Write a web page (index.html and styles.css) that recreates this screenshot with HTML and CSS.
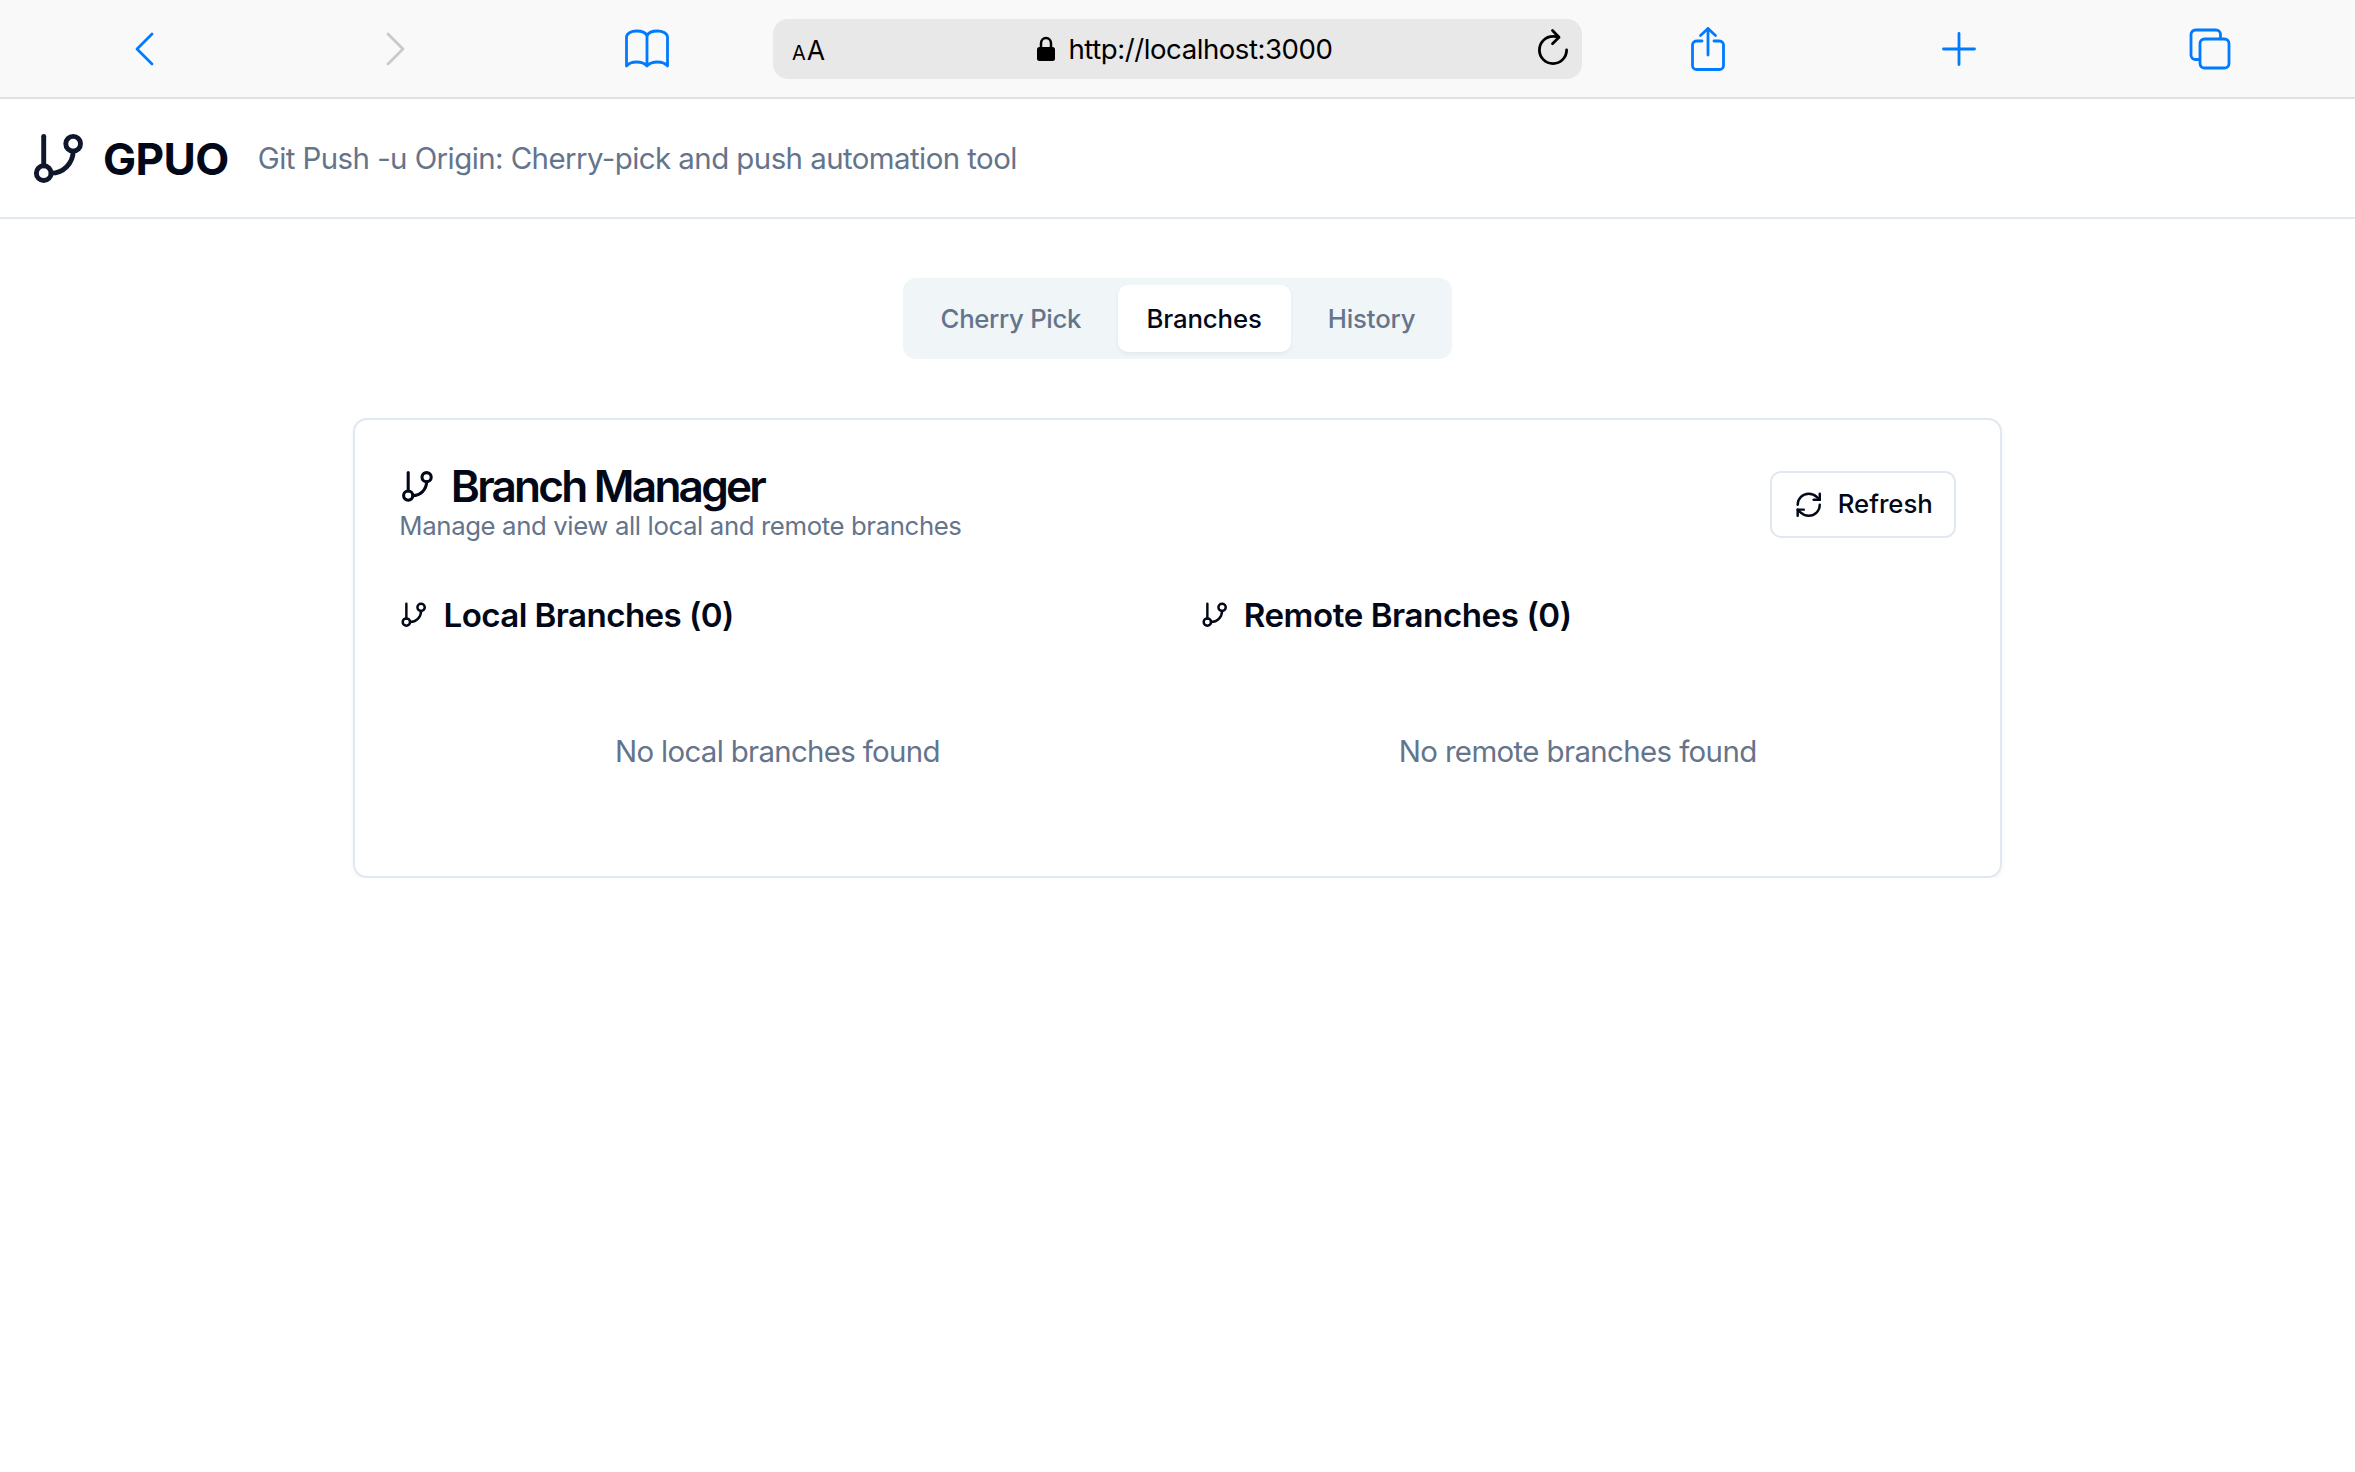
FILE: index.html
```html
<!DOCTYPE html>
<html lang="en">
<head>
<meta charset="utf-8">
<title>GPUO</title>
<link rel="stylesheet" href="styles.css">
</head>
<body>
<svg class="sprite" aria-hidden="true">
  <symbol id="branch" viewBox="0 0 24 24"><line x1="6" x2="6" y1="3" y2="15"/><circle cx="18" cy="6" r="3"/><circle cx="6" cy="18" r="3"/><path d="M18 9a9 9 0 0 1-9 9"/></symbol>
</svg>
<nav class="browser-bar">
  <span class="tool back"><svg width="22" height="38" viewBox="0 0 22 38"><path d="M19 4 4 19l15 15"/></svg></span>
  <span class="tool disabled"><svg width="22" height="38" viewBox="0 0 22 38"><path d="M3 4 18 19 3 34"/></svg></span>
  <span class="tool book"><svg width="46" height="40" viewBox="0 0 46 40"><path d="M23 7v30M23 7c-1-3-5-5-10.500-5S2.500 4.500 2.500 8v29c2-2.500 6-4 10-4S21 34.500 23 37c2-2.500 6.500-4 10.500-4s8 1.500 10 4V8c0-3.500-4.500-6-10-6S24 4 23 7"/></svg></span>
  <div class="address">
    <span class="reader"><span class="small">A</span><span class="large">A</span></span>
    <span class="location"><svg class="lock" width="18" height="25" viewBox="0 0 18 25"><rect width="18" height="14" y="11" rx="2.500"/><path d="M4 12V7.500a5 5.500 0 0 1 10 0V12"/></svg><span class="url">http://localhost:3000</span></span>
    <svg class="reload" width="32" height="38" viewBox="0 0 32 38"><path d="M29.600 22A13.600 13.600 0 1 1 16 8.400q3.500 0 6 1M15.500 2.500 22 9.200l-6.500 6.500"/></svg>
  </div>
  <span class="tool share"><svg width="36" height="46" viewBox="0 0 36 46"><path d="M12 15H6.500a4 4 0 0 0-4 4.500V39.500a4 4 0 0 0 4 4h23a4 4 0 0 0 4-4V19.500a4 4 0 0 0-4-4.500H24M18 29V2.500M10.500 9.500l7.500-7 7.500 7"/></svg></span>
  <span class="tool plus"><svg width="36" height="36" viewBox="0 0 36 36"><path d="M18 2.500v31M2.500 18h31"/></svg></span>
  <span class="tool windows"><svg width="44" height="44" viewBox="0 0 44 44"><rect x="12" y="12" width="29" height="29" rx="4.500"/><path d="M11.500 32.500H7.500A4.500 4.500 0 0 1 3 28V7.500A4.500 4.500 0 0 1 7.500 3h20.500a4.500 4.500 0 0 1 4.500 4.500V11"/></svg></span>
</nav>
<header class="app-header">
  <svg class="icon icon-lg"><use href="#branch"/></svg>
  <h1 class="brand">GPUO</h1>
  <p class="tagline">Git Push -u Origin: Cherry-pick and push automation tool</p>
</header>
<main class="page">
  <div class="tabs">
    <button class="tab cherry">Cherry Pick</button>
    <button class="tab active">Branches</button>
    <button class="tab history">History</button>
  </div>
  <section class="card">
    <div class="card-head">
      <div>
        <h2 class="title"><svg class="icon icon-md"><use href="#branch"/></svg><span class="title-text">Branch Manager</span></h2>
        <p class="subtitle">Manage and view all local and remote branches</p>
      </div>
      <button class="refresh"><svg class="icon icon-sm" viewBox="0 0 24 24"><path d="M3 12a9 9 0 0 1 9-9 9.750 9.750 0 0 1 6.740 2.740L21 8"/><path d="M21 3v5h-5"/><path d="M21 12a9 9 0 0 1-9 9 9.750 9.750 0 0 1-6.740-2.740L3 16"/><path d="M8 16H3v5"/></svg><span>Refresh</span></button>
    </div>
    <div class="columns">
      <div>
        <h3 class="group local"><svg class="icon icon-sm"><use href="#branch"/></svg><span>Local Branches (0)</span></h3>
        <p class="empty local">No local branches found</p>
      </div>
      <div>
        <h3 class="group"><svg class="icon icon-sm"><use href="#branch"/></svg><span>Remote Branches (0)</span></h3>
        <p class="empty">No remote branches found</p>
      </div>
    </div>
  </section>
</main>
</body>
</html>
```
FILE: styles.css
```css
html { font-size: 29.44px; }
* { box-sizing: border-box; }
body { margin: 0; background: #fff; color: #020817; font-family: Inter, "Liberation Sans", sans-serif; line-height: 1.5; }
h1, h2, h3, p { margin: 0; }
button { font: inherit; color: inherit; border: 0; background: none; padding: 0; }
.sprite { display: none; }
.icon { flex: none; fill: none; stroke: currentColor; stroke-width: 2; stroke-linecap: round; stroke-linejoin: round; }
.icon-lg { width: 2rem; height: 2rem; color: #0f172a; }
.icon-md { width: 1.25rem; height: 1.25rem; }
.icon-sm { width: 1rem; height: 1rem; }

/* Browser toolbar */
.browser-bar { display: grid; grid-template-columns: repeat(3, 251px) 809px repeat(3, 251px); align-items: center; height: 99px; padding: 1px 0 0 20px; background: #f9f9f9; border-bottom: 2px solid #e0e0e0; }
.tool { display: flex; justify-content: center; color: #007aff; }
.tool svg, .reload { fill: none; stroke: currentColor; stroke-width: 2.8; stroke-linecap: round; stroke-linejoin: round; }
.tool.back { padding-right: 3px; }
.tool.book { padding-right: 2px; }
.tool.disabled { color: #c9c9c9; padding-right: 1px; }
.tool.share, .tool.plus { padding-left: 1px; }
.tool.windows { padding-left: 1px; }
.address { display: grid; grid-template-columns: 60px 1fr 52px; align-items: center; height: 60px; padding: 0 13px 0 19px; border-radius: 15px; background: #e8e8e8; color: #000; }
.reader { padding-top: 2px; line-height: 1; white-space: nowrap; }
.small { font-size: 20px; }
.large { margin-left: 1px; font-size: 26.5px; }
.location { display: flex; justify-content: center; align-items: center; gap: 14px; font-size: 27.6px; }
.url { padding-top: 1px; letter-spacing: -.0165em; }
.lock path { fill: none; stroke: #000; stroke-width: 2.5; }
.reload { justify-self: end; margin-top: -4px; }

/* App header */
.app-header { display: flex; align-items: center; height: 120px; padding: 0 1rem; border-bottom: 2px solid #e2e8f0; }
.brand { margin-left: .5rem; padding-top: 2px; font-size: 1.5rem; font-weight: 700; letter-spacing: -.014em; }
.tagline { margin-left: .99rem; letter-spacing: -.0192em; color: #64748b; }

.page { display: flex; flex-direction: column; align-items: center; gap: 2rem; padding-top: 2rem; }

/* Tabs */
.tabs { display: grid; grid-template-columns: 207.5px 173px 154px; width: 549.5px; height: 81px; padding: .25rem; border-radius: 13px; background: #f0f5f8; color: #64748b; font-size: .875rem; font-weight: 500; }
.tab { padding-top: 1px; border-radius: 10px; letter-spacing: -.005em; }
.tab.cherry { padding-right: 6px; letter-spacing: -.0125em; }
.tab.history { padding-left: 8px; }
.tab.active { background: #fff; color: #020817; box-shadow: 0 2px 4px rgba(0, 0, 0, .06); }

/* Branch manager card */
.card { width: 56rem; padding: 1.5rem; border: 2px solid #e2e8f0; border-radius: 14px; box-shadow: 0 2px 4px rgba(0, 0, 0, .05); }
.card-head { display: flex; justify-content: space-between; align-items: center; }
.title { display: flex; align-items: center; gap: .5rem; font-size: 1.5rem; line-height: 1; font-weight: 600; letter-spacing: -.063em; }
.subtitle { color: #64748b; font-size: .875rem; line-height: 1.25rem; letter-spacing: -.0149em; }
.refresh { display: flex; align-items: center; justify-content: center; gap: .5rem; width: 186px; height: 2.25rem; padding-left: 1px; border: 2px solid #e2e8f0; border-radius: 11px; font-size: .875rem; font-weight: 500; letter-spacing: -.002em; }
.columns { display: grid; grid-template-columns: 1fr 1fr; gap: 1.5rem; padding-top: 1.5rem; }
.group { display: flex; align-items: center; gap: .5rem; font-size: 1.125rem; line-height: 1.75rem; font-weight: 600; letter-spacing: -.0131em; }
.group.local { letter-spacing: -.0174em; }
.group span { padding-top: 1px; margin-bottom: -1px; }
.empty { margin-top: 1rem; padding: 2rem 0; text-align: center; letter-spacing: -.0211em; color: #64748b; }
.empty.local { letter-spacing: -.0234em; }
```
